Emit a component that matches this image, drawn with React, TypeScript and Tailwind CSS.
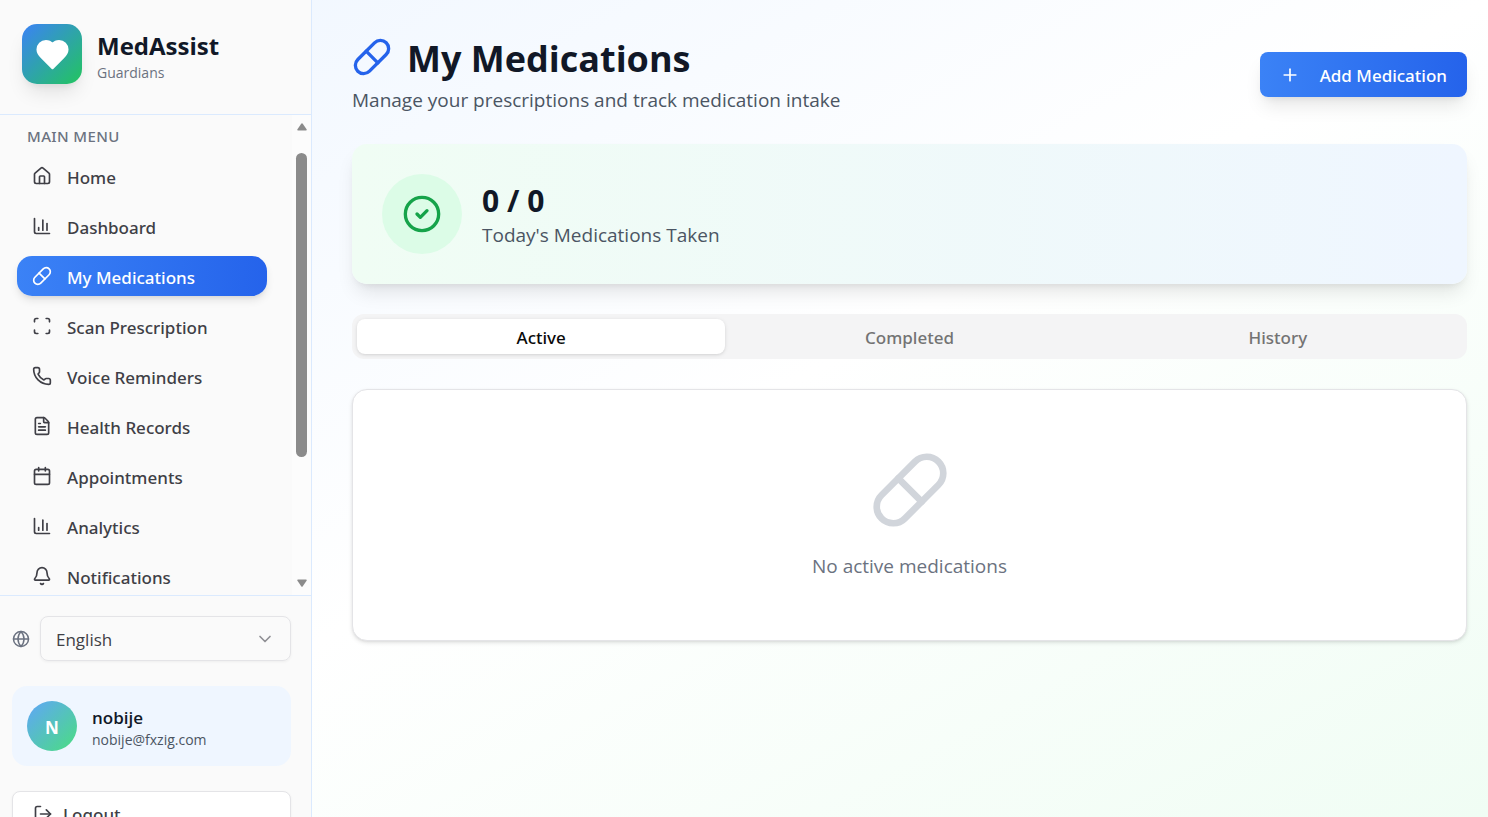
import { useState } from "react";
import type { ReactNode } from "react";
import {
  Bell,
  Calendar,
  ChartColumn,
  ChevronDown,
  CircleCheck,
  FileText,
  Globe,
  House,
  LogOut,
  Phone,
  Pill,
  Plus,
  Scan,
} from "lucide-react";
import type { LucideIcon } from "lucide-react";

const menu: { label: string; icon: LucideIcon }[] = [
  { label: "Home", icon: House },
  { label: "Dashboard", icon: ChartColumn },
  { label: "My Medications", icon: Pill },
  { label: "Scan Prescription", icon: Scan },
  { label: "Voice Reminders", icon: Phone },
  { label: "Health Records", icon: FileText },
  { label: "Appointments", icon: Calendar },
  { label: "Analytics", icon: ChartColumn },
  { label: "Notifications", icon: Bell },
];

const tabs = ["Active", "Completed", "History"];

function Brand() {
  return (
    <div className="flex shrink-0 items-center gap-[15px] border-b border-blue-100 px-[22px] pt-6 pb-[30px]">
      <div className="flex size-[60px] items-center justify-center rounded-[15px] bg-linear-to-br/srgb from-[#3b82f6] to-[#22c55e] shadow-[0_12px_19px_-4px_rgb(0_0_0/0.1),0_5px_8px_-5px_rgb(0_0_0/0.1)]">
        <svg viewBox="0 0 24 24" className="size-[35px] fill-white stroke-white stroke-2" strokeLinecap="round" strokeLinejoin="round" aria-hidden="true">
          <path d="M19 14c1.49-1.46 3-3.21 3-5.5A5.5 5.5 0 0 0 16.5 3c-1.76 0-3 .5-4.5 2-1.5-1.5-2.74-2-4.5-2A5.5 5.5 0 0 0 2 8.5c0 2.3 1.5 4.05 3 5.5l7 7Z" />
        </svg>
      </div>
      <div className="pt-[7px]">
        <p className="text-[24px] leading-[30px] font-bold text-[#111827]">MedAssist</p>
        <p className="text-[14px] leading-[23px] text-[#6b7280]">Guardians</p>
      </div>
    </div>
  );
}

function ScrollTrack() {
  return (
    <div className="flex w-[19px] shrink-0 flex-col items-center bg-[#fcfcfc] py-2" aria-hidden="true">
      <svg viewBox="0 0 10 8" className="h-2 w-[10px] fill-[#8b8b8b]">
        <path d="M4.2.8Q5-.2 5.8.8L9.7 6.4Q10 7.4 9 7.5H1Q0 7.4.3 6.4Z" />
      </svg>
      <div className="mt-[22px] h-[304px] w-[11px] rounded-full bg-[#8b8b8b]" />
      <svg viewBox="0 0 10 8" className="mt-auto h-2 w-[10px] fill-[#8b8b8b]">
        <path d="M4.2 7.2Q5 8.2 5.8 7.2L9.7 1.6Q10 .6 9 .5H1Q0 .6.3 1.6Z" />
      </svg>
    </div>
  );
}

function Menu() {
  return (
    <div className="flex h-[480px] shrink-0">
      <nav className="min-w-0 flex-1 overflow-hidden pr-[25px] pl-[17px]" aria-label="Main menu">
        <h2 className="px-[10px] pt-[7px] pb-[6px] font-['Noto_Sans',sans-serif] text-[15px] leading-7 font-medium tracking-wide text-[#6b7280]">
          MAIN MENU
        </h2>
        <ul className="flex flex-col gap-[10px]">
          {menu.map(({ label, icon: Icon }) => {
            const active = label === "My Medications";
            return (
              <li key={label}>
                <a
                  href="#"
                  aria-current={active ? "page" : undefined}
                  className={
                    active
                      ? "flex h-10 items-center gap-[15px] rounded-[15px] bg-linear-to-r from-[#3b82f6] to-[#2563eb] px-[15px] font-['Noto_Sans',sans-serif] text-[17px] font-medium text-white shadow-[0_5px_8px_-1px_rgb(0_0_0/0.1),0_3px_5px_-3px_rgb(0_0_0/0.1)]"
                      : "flex h-10 items-center gap-[15px] rounded-[15px] px-[15px] font-['Noto_Sans',sans-serif] text-[17px] font-medium text-[#3f3f46]"
                  }
                >
                  <Icon className="size-5 shrink-0" aria-hidden="true" />
                  <span className="pt-[3px] whitespace-nowrap">{label}</span>
                </a>
              </li>
            );
          })}
        </ul>
      </nav>
      <ScrollTrack />
    </div>
  );
}

function Account() {
  return (
    <div className="flex shrink-0 flex-col gap-[25px] border-t border-blue-100 py-5 pr-5 pl-3">
      <div className="flex items-center gap-[10px]">
        <Globe className="size-[18px] shrink-0 text-[#6b7280]" aria-hidden="true" />
        <div className="relative flex-1">
          <select
            aria-label="Language"
            className="h-[45px] w-full appearance-none rounded-[8px] border border-[#e4e4e7] bg-transparent pt-[2px] pr-10 pl-[15px] text-[17px] text-[#3f3f46] shadow-[0_1px_3px_rgb(0_0_0/0.05)]"
          >
            <option>English</option>
          </select>
          <ChevronDown className="pointer-events-none absolute top-[13px] right-4 size-5 text-[#8f8f94]" aria-hidden="true" />
        </div>
      </div>
      <div className="flex h-20 items-center gap-[15px] rounded-[15px] bg-[#eff6ff] px-[15px]">
        <div className="flex size-[50px] items-center justify-center rounded-full bg-linear-to-br/srgb from-[#60a5fa] to-[#4ade80] pt-[3px] text-[17px] font-bold text-white">
          N
        </div>
        <div className="pt-[6px]">
          <p className="text-[17px] leading-[22px] font-semibold text-[#111827]">nobije</p>
          <p className="text-[14px] leading-[22px] text-[#4b5563]">nobije@fxzig.com</p>
        </div>
      </div>
      <button
        type="button"
        className="flex h-[45px] items-center gap-[10px] rounded-[8px] border border-[#e4e4e7] bg-white px-5 font-['Noto_Sans',sans-serif] text-[17px] font-medium text-[#3f3f46] shadow-[0_1px_3px_rgb(0_0_0/0.05)]"
      >
        <LogOut className="size-5" aria-hidden="true" />
        <span className="pt-[2px]">Logout</span>
      </button>
    </div>
  );
}

function PageHeader() {
  return (
    <header className="flex items-center justify-between">
      <div>
        <h1 className="flex items-center gap-[15px] text-[36px] leading-10 font-bold text-[#111827]">
          <Pill className="size-10 text-[#2563eb]" aria-hidden="true" />
          <span className="pt-1">My Medications</span>
        </h1>
        <p className="mt-2 text-[19px] leading-[27px] text-[#4b5563]">Manage your prescriptions and track medication intake</p>
      </div>
      <button
        type="button"
        className="flex h-[45px] items-center gap-5 rounded-[8px] bg-linear-to-r from-[#3b82f6] to-[#2563eb] px-5 font-['Noto_Sans',sans-serif] text-[17px] font-medium text-white shadow-[0_12px_19px_-4px_rgb(0_0_0/0.1),0_5px_8px_-5px_rgb(0_0_0/0.1)]"
      >
        <Plus className="size-5" aria-hidden="true" />
        <span className="pt-[2px]">Add Medication</span>
      </button>
    </header>
  );
}

function Summary() {
  return (
    <section className="flex items-center gap-5 rounded-[15px] bg-linear-to-r from-[#f0fdf4] to-[#eff6ff] p-[30px] shadow-[0_12px_19px_-4px_rgb(0_0_0/0.1),0_5px_8px_-5px_rgb(0_0_0/0.1)]">
      <div className="flex size-20 items-center justify-center rounded-full bg-[#dcfce7]">
        <CircleCheck className="size-10 text-[#16a34a]" aria-hidden="true" />
      </div>
      <div className="pt-[3px]">
        <p className="text-[30px] leading-10 font-bold text-[#111827]">0 / 0</p>
        <p className="text-[19px] leading-[29px] text-[#4b5563]">Today's Medications Taken</p>
      </div>
    </section>
  );
}

function Card({ children }: { children: ReactNode }) {
  return (
    <section className="flex flex-col items-center gap-[22px] rounded-[15px] border border-[#e4e4e7] bg-white py-[60px] shadow-[0_2px_4px_rgb(0_0_0/0.1),0_1px_3px_-1px_rgb(0_0_0/0.1)]">
      {children}
    </section>
  );
}

export default function App() {
  const [tab, setTab] = useState("Active");

  return (
    <div className="flex h-screen overflow-hidden bg-linear-to-br from-[#eff6ff] via-white to-[#f0fdf4] font-['Open_Sans','Noto_Sans',sans-serif]">
      <aside className="flex w-[312px] shrink-0 flex-col overflow-hidden border-r border-blue-100 bg-[#fafafa]">
        <Brand />
        <Menu />
        <Account />
      </aside>
      <main className="flex min-w-0 flex-1 flex-col gap-[30px] pt-[35px] pr-[21px] pb-10 pl-10">
        <PageHeader />
        <Summary />
        <div className="grid h-[45px] shrink-0 grid-cols-3 rounded-[12px] bg-[#f4f4f5] p-[5px]" role="tablist">
          {tabs.map((name) => (
            <button
              key={name}
              type="button"
              role="tab"
              aria-selected={tab === name}
              onClick={() => setTab(name)}
              className={
                tab === name
                  ? "rounded-[8px] bg-white pt-[2px] font-['Noto_Sans',sans-serif] text-[17px] font-medium text-[#0a0a0a] shadow-[0_1px_4px_rgb(0_0_0/0.1),0_1px_3px_-1px_rgb(0_0_0/0.1)]"
                  : "rounded-[8px] pt-[2px] font-['Noto_Sans',sans-serif] text-[17px] font-medium text-[#737373]"
              }
            >
              {name}
            </button>
          ))}
        </div>
        <Card>
          <Pill className="size-20 text-[#d1d5db]" aria-hidden="true" />
          <p className="text-[19px] leading-7 text-[#6b7280]">No {tab.toLowerCase()} medications</p>
        </Card>
      </main>
    </div>
  );
}
